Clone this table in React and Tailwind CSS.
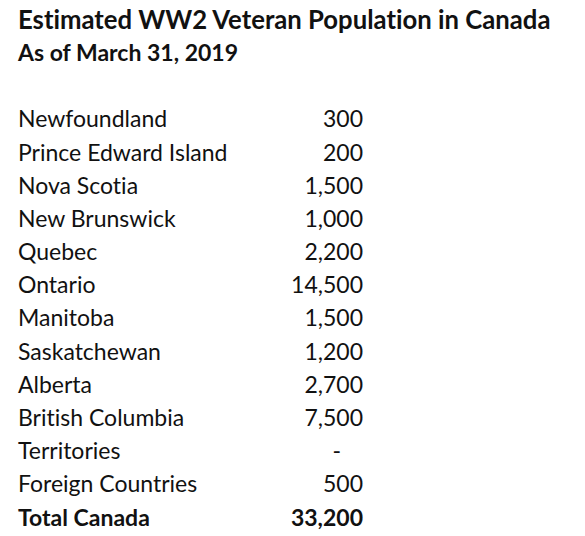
const rows = [
  ['Newfoundland', '300'],
  ['Prince Edward Island', '200'],
  ['Nova Scotia', '1,500'],
  ['New Brunswick', '1,000'],
  ['Quebec', '2,200'],
  ['Ontario', '14,500'],
  ['Manitoba', '1,500'],
  ['Saskatchewan', '1,200'],
  ['Alberta', '2,700'],
  ['British Columbia', '7,500'],
  ['Territories', '-'],
  ['Foreign Countries', '500'],
];

export default function App() {
  return (
    <div className="w-[585px] h-[536px] bg-white text-[#111] pl-[18px] pt-[2px] [font-variant-ligatures:none]" style={{ fontFamily: 'Lato, "Open Sans", sans-serif' }}>
      <h1 className="text-[25.7px] font-bold leading-[34px]">Estimated WW2 Veteran Population in Canada</h1>
      <div className="text-[23px] font-bold leading-[32px]">As of March 31, 2019</div>
      <div className="mt-[34px] w-[345px]">
        {rows.map(([name, value]) => (
          <div key={name} className="flex justify-between items-center h-[33.2px] text-[23px]">
            <span>{name}</span>
            <span className={value === '-' ? 'pr-[22px]' : ''}>{value}</span>
          </div>
        ))}
        <div className="flex justify-between items-center h-[33.2px] text-[23px] font-bold">
          <span>Total Canada</span>
          <span>33,200</span>
        </div>
      </div>
    </div>
  );
}
